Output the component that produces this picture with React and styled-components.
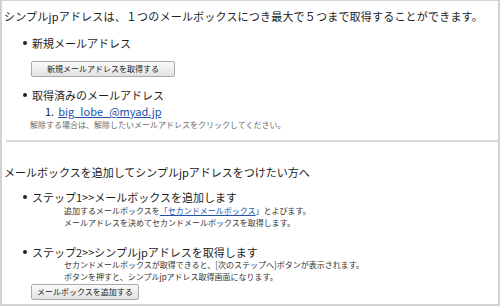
import React from "react";
import styled, { createGlobalStyle } from "styled-components";

const Global = createGlobalStyle`
  html, body { margin: 0; padding: 0; background: #fff; }
  body { font-family: "Noto Sans CJK JP", "Noto Sans", sans-serif; color: #222; }
`;

const Frame = styled.div`
  box-sizing: border-box;
  width: 500px;
  height: 306px;
  border: 2px solid #d2d2d2;
  border-top-width: 1px;
  padding: 7px 0 0 2px;
  overflow: hidden;
`;

const Line = styled.div`
  font-size: ${(p) => p.$size || 11}px;
  line-height: ${(p) => p.$lh || 16}px;
  height: ${(p) => p.$lh || 16}px;
  margin-top: ${(p) => p.$mt || 0}px;
  padding-left: ${(p) => p.$indent || 0}px;
  letter-spacing: ${(p) => p.$ls || 0}px;
  color: ${(p) => p.$color || "#222"};
  white-space: nowrap;
`;

const Bullet = styled.div`
  display: flex;
  align-items: center;
  gap: 5px;
  padding-left: 19px;
  font-size: 11px;
  line-height: ${(p) => p.$lh || 16}px;
  height: ${(p) => p.$lh || 16}px;
  margin-top: ${(p) => p.$mt || 0}px;
  color: #1e1e1e;
  white-space: nowrap;
`;

const Dot = styled.span`
  width: 4px;
  height: 4px;
  border-radius: 50%;
  background: #222;
  flex: none;
`;

const Button = styled.button`
  display: block;
  box-sizing: border-box;
  margin-top: ${(p) => p.$mt || 0}px;
  margin-left: 27px;
  width: ${(p) => p.$w}px;
  height: ${(p) => p.$h || 16}px;
  padding: 0;
  font-family: inherit;
  font-size: 8px;
  line-height: 1;
  color: #222;
  background: linear-gradient(#fafafa, #e2e2e2);
  border: 1px solid #a9a9a9;
  border-radius: 2px;
  text-align: center;
`;

const Numbered = styled.div`
  display: flex;
  align-items: center;
  gap: 4px;
  padding-left: 41px;
  height: 13px;
  line-height: 13px;
  margin-top: ${(p) => p.$mt || 0}px;
  font-size: 11px;
  color: #222;
`;

const Link = styled.a`
  color: #2352a8;
  text-decoration: underline;
  text-underline-offset: 1px;
`;

const Separator = styled.hr`
  border: none;
  height: 2px;
  background: #d9d9d9;
  margin: ${(p) => p.$mt || 0}px 0 0 2px;
`;

export default function App() {
  return (
    <>
      <Global />
      <Frame>
        <Line $ls={0.2}>
          シンプルjpアドレスは、１つのメールボックスにつき最大で５つまで取得することができます。
        </Line>
        <Bullet $mt={11}>
          <Dot />
          新規メールアドレス
        </Bullet>
        <Button $mt={10} $w={144}>
          新規メールアドレスを取得する
        </Button>
        <Bullet $mt={10}>
          <Dot />
          取得済みのメールアドレス
        </Bullet>
        <Numbered $mt={2}>
          <span>1.</span>
          <Link href="#">big_lobe_@myad.jp</Link>
        </Numbered>
        <Line $size={8} $lh={11} $mt={1} $indent={26} $color="#6a6a6a">
          解除する場合は、解除したいメールアドレスをクリックしてください。
        </Line>
        <Separator $mt={10} />
        <Line $mt={22}>
          メールボックスを追加してシンプルjpアドレスをつけたい方へ
        </Line>
        <Bullet $mt={9}>
          <Dot />
          ステップ1&gt;&gt;メールボックスを追加します
        </Bullet>
        <Line $size={8} $lh={12} $indent={60} $color="#333">
          追加するメールボックスを<Link href="#">「セカンドメールボックス</Link>」とよびます。
        </Line>
        <Line $size={8} $lh={12} $indent={60} $color="#333">
          メールアドレスを決めてセカンドメールボックスを取得します。
        </Line>
        <Bullet $mt={16} $lh={14}>
          <Dot />
          ステップ2&gt;&gt;シンプルjpアドレスを取得します
        </Bullet>
        <Line $size={8} $lh={12} $indent={60} $color="#333">
          セカンドメールボックスが取得できると、[次のステップへ]ボタンが表示されます。
        </Line>
        <Line $size={8} $lh={12} $indent={60} $color="#333">
          ボタンを押すと、シンプルjpアドレス取得画面になります。
        </Line>
        <Button $mt={1} $w={108} $h={16}>
          メールボックスを追加する
        </Button>
      </Frame>
    </>
  );
}
